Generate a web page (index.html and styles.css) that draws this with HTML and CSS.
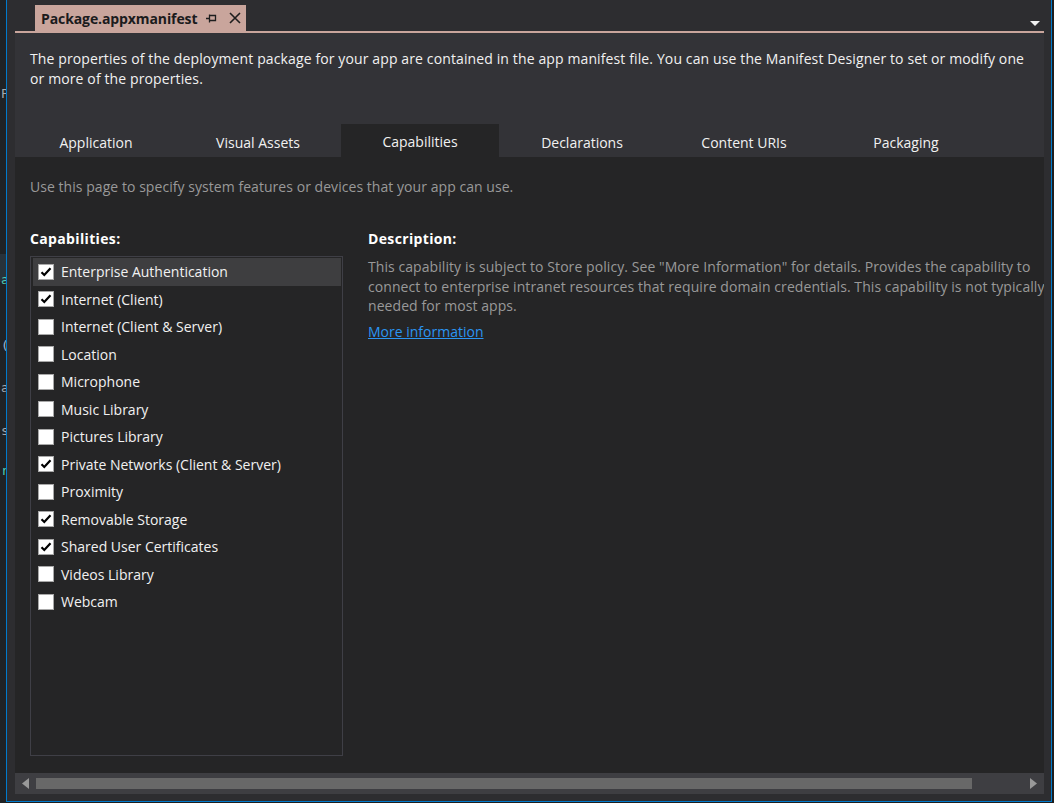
FILE: index.html
```html
<!DOCTYPE html>
<html lang="en">
<head>
<meta charset="utf-8">
<title>Package.appxmanifest</title>
<link rel="stylesheet" href="styles.css">
</head>
<body>
<div class="screen">
  <div class="behind">
    <span class="frag f-p">P</span>
    <span class="frag f-band"><span class="teal">a</span></span>
    <span class="frag f-paren">(</span>
    <span class="frag f-a">a</span>
    <span class="frag f-s">s</span>
    <span class="frag f-r teal">r</span>
  </div>
  <div class="window">
    <div class="tabstrip">
      <div class="doctab">
        <span class="doctab-title">Package.appxmanifest</span>
        <svg class="pin" width="11" height="9" viewBox="0 0 11 9"><path d="M0 4.5H3.5M3.5 0.5V8.5M3.5 1.5H9.5V6.5H3.5" fill="none" stroke="#1e1e1e" stroke-width="1.3"/></svg>
        <svg class="close" width="12" height="12" viewBox="0 0 12 12"><path d="M1 1L11 11M11 1L1 11" stroke="#1e1e1e" stroke-width="1.6"/></svg>
      </div>
      <svg class="dropdown" width="10" height="5" viewBox="0 0 10 5"><path d="M0 0H10L5 5Z" fill="#f1f1f1"/></svg>
    </div>
    <div class="accent"></div>
    <div class="designer">
      <div class="intro">
        <p>The properties of the deployment package for your app are contained in the app manifest file. You can use the Manifest Designer to set or modify one<br>or more of the properties.</p>
      </div>
      <div class="tabs">
        <div class="tab">Application</div>
        <div class="tab">Visual Assets</div>
        <div class="tab active">Capabilities</div>
        <div class="tab">Declarations</div>
        <div class="tab">Content URIs</div>
        <div class="tab">Packaging</div>
      </div>
      <div class="page">
        <p class="hint">Use this page to specify system features or devices that your app can use.</p>
        <div class="cols">
          <div class="capcol">
            <h3>Capabilities:</h3>
            <ul class="listbox">
              <li class="item selected"><span class="check on"></span>Enterprise Authentication</li>
              <li class="item"><span class="check on"></span>Internet (Client)</li>
              <li class="item"><span class="check"></span>Internet (Client &amp; Server)</li>
              <li class="item"><span class="check"></span>Location</li>
              <li class="item"><span class="check"></span>Microphone</li>
              <li class="item"><span class="check"></span>Music Library</li>
              <li class="item"><span class="check"></span>Pictures Library</li>
              <li class="item"><span class="check on"></span>Private Networks (Client &amp; Server)</li>
              <li class="item"><span class="check"></span>Proximity</li>
              <li class="item"><span class="check on"></span>Removable Storage</li>
              <li class="item"><span class="check on"></span>Shared User Certificates</li>
              <li class="item"><span class="check"></span>Videos Library</li>
              <li class="item"><span class="check"></span>Webcam</li>
            </ul>
          </div>
          <div class="desccol">
            <h3>Description:</h3>
            <p class="desc">This capability is subject to Store policy. See "More Information" for details. Provides the capability to<br>connect to enterprise intranet resources that require domain credentials. This capability is not typically<br>needed for most apps.</p>
            <a class="more" href="#">More information</a>
          </div>
        </div>
      </div>
      <div class="hscroll">
        <div class="sbtn"><svg width="7" height="11" viewBox="0 0 7 11"><path d="M7 0V11L0 5.5Z" fill="#999"/></svg></div>
        <div class="track"><div class="thumb"></div></div>
        <div class="sbtn"><svg width="7" height="11" viewBox="0 0 7 11"><path d="M0 0V11L7 5.5Z" fill="#999"/></svg></div>
      </div>
    </div>
  </div>
  <div class="edge"></div>
</div>
</body>
</html>
```

FILE: styles.css
```css
html, body {
  margin: 0;
  padding: 0;
  background: #1e1e1e;
}

body {
  font-family: "Open Sans", "Noto Sans", sans-serif;
  font-size: 14px;
}

.screen {
  display: flex;
  width: 1054px;
  height: 803px;
  overflow: hidden;
}

/* editor peeking behind the floating window */
.behind {
  width: 6px;
  flex: none;
  background: #1f2225;
  overflow: hidden;
  display: flex;
  flex-direction: column;
  font-family: "DejaVu Sans Mono", monospace;
  font-size: 13px;
  line-height: 16px;
  color: #a3a8ad;
}

.frag {
  display: block;
  height: 16px;
  padding-left: 1px;
}

.teal { color: #4ec9b0; }

.f-p { margin-top: 86px; }
.f-band {
  margin-top: 152px;
  height: 28px;
  line-height: 52px;
  background: #27323b;
}
.f-paren { margin-top: 56px; color: #9cb4cc; }
.f-a { margin-top: 26px; }
.f-s { margin-top: 27px; }
.f-r { margin-top: 24px; }

.window {
  width: 1046px;
  height: 802px;
  flex: none;
  box-sizing: border-box;
  border: 1px solid #007acc;
  border-top: none;
  background: #2d2d30;
  padding: 0 7px 7px 8px;
  display: flex;
  flex-direction: column;
}

.edge {
  flex: 1;
  background: #1e1e1e;
}

/* document tab strip */
.tabstrip {
  height: 31px;
  display: flex;
  align-items: flex-end;
  flex: none;
}

.doctab {
  margin-left: 20px;
  width: 211px;
  height: 26px;
  box-sizing: border-box;
  background: #c9a59c;
  display: flex;
  align-items: center;
  padding-left: 6px;
}

.doctab-title {
  font-weight: 700;
  font-size: 14px;
  letter-spacing: -0.1px;
  color: #1b1b1c;
  white-space: nowrap;
}

.pin {
  margin-left: auto;
}

.close {
  margin-left: 12px;
  margin-right: 5px;
}

.dropdown {
  margin-left: auto;
  margin-right: 4px;
  margin-bottom: 5px;
}

.accent {
  height: 2px;
  background: #c9a59c;
  flex: none;
}

/* manifest designer */
.designer {
  flex: 1;
  min-height: 0;
  display: flex;
  flex-direction: column;
}

.intro {
  height: 91px;
  flex: none;
  box-sizing: border-box;
  background: #333337;
  padding: 16px 15px 0;
  color: #f1f1f1;
  line-height: 20px;
}

.intro p {
  margin: 0;
  white-space: nowrap;
  letter-spacing: 0.12px;
}

.tabs {
  height: 33px;
  flex: none;
  background: #333337;
  display: flex;
}

.tab {
  width: 162px;
  box-sizing: border-box;
  display: flex;
  justify-content: center;
  align-items: center;
  padding-top: 3px;
  color: #f1f1f1;
}

.tab.active {
  width: 158px;
  margin: 0 2px;
  padding-top: 1px;
  background: #252526;
}

.page {
  flex: 1;
  min-height: 0;
  background: #252526;
  padding: 20px 15px 0;
  overflow: hidden;
}

.hint {
  margin: 0;
  line-height: 20px;
  letter-spacing: 0.05px;
  color: #999999;
}

.cols {
  display: flex;
  gap: 25px;
  margin-top: 32px;
}

.capcol {
  width: 313px;
  flex: none;
}

h3 {
  margin: 0;
  font-size: 14px;
  font-weight: 700;
  line-height: 20px;
  letter-spacing: 0.35px;
  color: #ffffff;
}

.listbox {
  list-style: none;
  margin: 7px 0 0;
  height: 500px;
  box-sizing: border-box;
  border: 1px solid #3f3f46;
  padding: 1px 1px 1px 2px;
}

.item {
  height: 27.5px;
  display: flex;
  align-items: center;
  gap: 7px;
  padding-left: 5px;
  color: #f1f1f1;
  white-space: nowrap;
}

.item.selected {
  background: #3e3e40;
}

.check {
  width: 16px;
  height: 16px;
  flex: none;
  box-sizing: border-box;
  background: #ffffff;
  border: 1px solid #a8a8a8;
}

.check.on {
  background: #ffffff url("data:image/svg+xml,%3Csvg xmlns='http://www.w3.org/2000/svg' width='14' height='14' viewBox='0 0 14 14'%3E%3Cpath d='M2.5 7.2L5.3 10L11.5 3.2' fill='none' stroke='%23000' stroke-width='2.2'/%3E%3C/svg%3E") center / 14px 14px no-repeat;
}

.desccol {
  flex: 1;
  min-width: 0;
  margin-right: -15px;
}

.desc {
  margin: 8px 0 0;
  line-height: 19.5px;
  letter-spacing: 0.07px;
  color: #999999;
  white-space: nowrap;
}

.more {
  display: inline-block;
  margin-top: 6px;
  line-height: 20px;
  color: #2b95f2;
  text-decoration: underline;
}

/* horizontal scrollbar */
.hscroll {
  height: 21px;
  flex: none;
  background: #3e3e42;
  display: flex;
}

.sbtn {
  width: 21px;
  display: flex;
  align-items: center;
  justify-content: center;
}

.track {
  flex: 1;
  padding-top: 5px;
}

.thumb {
  width: 936px;
  height: 11px;
  background: #686868;
}
```
